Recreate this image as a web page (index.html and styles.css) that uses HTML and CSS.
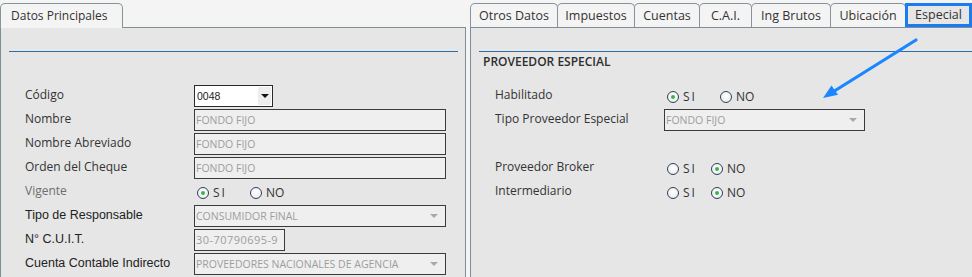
FILE: index.html
```html
<!DOCTYPE html>
<html lang="es">
<head>
<meta charset="utf-8">
<title>Proveedor</title>
<link rel="stylesheet" href="styles.css">
</head>
<body>
<div class="screen">
  <section class="panel panel-left">
    <nav class="tabs">
      <div class="tab tab-main">Datos Principales</div>
    </nav>
    <div class="panel-body">
      <div class="rule"></div>
      <div class="form">
        <label class="lbl">Código</label>
        <div class="combo"><span class="combo-val">0048</span><span class="combo-btn"><i class="tri tri-dark"></i></span></div>

        <label class="lbl">Nombre</label>
        <div class="field field-wide">FONDO FIJO</div>

        <label class="lbl">Nombre Abreviado</label>
        <div class="field field-wide">FONDO FIJO</div>

        <label class="lbl">Orden del Cheque</label>
        <div class="field field-wide">FONDO FIJO</div>

        <label class="lbl lbl-muted">Vigente</label>
        <div class="radios radios-wide">
          <span class="opt"><i class="dot on"></i><span class="opt-si">SI</span></span>
          <span class="opt"><i class="dot"></i><span>NO</span></span>
        </div>

        <label class="lbl lbl-arial">Tipo de Responsable</label>
        <div class="field field-wide field-select">CONSUMIDOR FINAL<i class="tri"></i></div>

        <label class="lbl lbl-arial">N° C.U.I.T.</label>
        <div class="field field-cuit">30-70790695-9</div>

        <label class="lbl lbl-arial">Cuenta Contable Indirecto</label>
        <div class="field field-wide field-select">PROVEEDORES NACIONALES DE AGENCIA<i class="tri"></i></div>
      </div>
    </div>
  </section>

  <section class="panel panel-right">
    <nav class="tabs">
      <div class="tab tab-otros">Otros Datos</div>
      <div class="tab tab-imp">Impuestos</div>
      <div class="tab tab-cue">Cuentas</div>
      <div class="tab tab-cai">C.A.I.</div>
      <div class="tab tab-ing">Ing Brutos</div>
      <div class="tab tab-ubi">Ubicación</div>
      <div class="tab tab-active">Especial</div>
    </nav>
    <div class="panel-body">
      <div class="rule"></div>
      <h2 class="section-title">PROVEEDOR ESPECIAL</h2>
      <div class="form form-right">
        <label class="lbl">Habilitado</label>
        <div class="radios radios-wide">
          <span class="opt"><i class="dot on"></i><span class="opt-si">SI</span></span>
          <span class="opt"><i class="dot"></i><span>NO</span></span>
        </div>

        <label class="lbl">Tipo Proveedor Especial</label>
        <div class="field field-mid field-select">FONDO FIJO<i class="tri"></i></div>

        <span class="spacer"></span>
        <span class="spacer"></span>

        <label class="lbl">Proveedor Broker</label>
        <div class="radios radios-narrow">
          <span class="opt"><i class="dot"></i><span class="opt-si">SI</span></span>
          <span class="opt"><i class="dot on"></i><span>NO</span></span>
        </div>

        <label class="lbl">Intermediario</label>
        <div class="radios radios-narrow">
          <span class="opt"><i class="dot"></i><span class="opt-si">SI</span></span>
          <span class="opt"><i class="dot on"></i><span>NO</span></span>
        </div>
      </div>
    </div>
  </section>

  <svg class="arrow" width="972" height="277" viewBox="0 0 972 277" aria-hidden="true">
    <line x1="916" y1="40" x2="832" y2="92.5" stroke="#1a86ff" stroke-width="3.2" stroke-linecap="round"/>
    <polygon points="823,98 838,94.8 831.5,85.6" fill="#1a86ff"/>
  </svg>
</div>
</body>
</html>
```

FILE: styles.css
```css
html, body {
  margin: 0;
  padding: 0;
  background: #f4f4f4;
  overflow: hidden;
}

.screen {
  position: relative;
  display: flex;
  gap: 4px;
  width: 972px;
  height: 277px;
  padding-top: 3px;
  box-sizing: border-box;
  overflow: hidden;
  font-family: "Open Sans", "Noto Sans", sans-serif;
  font-size: 12px;
  color: #333;
}

.panel {
  flex: none;
  display: flex;
  flex-direction: column;
}

.panel-left { width: 466px; }
.panel-right { width: 506px; }

/* ---------- tabs ---------- */
.tabs {
  display: flex;
  height: 24px;
  position: relative;
  z-index: 1;
}

.tab {
  flex: none;
  height: 24px;
  line-height: 23px;
  padding: 0;
  text-align: center;
  box-sizing: border-box;
  border: 1px solid #87959b;
  border-bottom: none;
  border-radius: 5px 5px 0 0;
  background: #f4f4f4;
  color: #333;
  font-size: 12.5px;
  white-space: nowrap;
}

.tab + .tab { margin-left: -1px; }

.tab-otros { width: 88px; }
.tab-imp { width: 78px; }
.tab-cue { width: 66px; }
.tab-cai { width: 53px; }
.tab-ing { width: 80px; }
.tab-ubi { width: 76px; }

.tab-main {
  width: 123px;
  height: 25px;
  padding-left: 10px;
  text-align: left;
  margin-bottom: -1px;
  font-size: 12px;
}

.tab-active {
  width: 67px;
  border: 3px solid #1b7cf0;
  border-radius: 0;
  background: #e6e6e6;
  line-height: 18px;
  height: 24px;
}

/* ---------- body ---------- */
.panel-body {
  flex: 1;
  border: 1px solid #7f8e95;
  border-bottom: none;
  background: #e6e6e6;
}

.panel-right .panel-body { border-right: none; }

.rule {
  height: 1px;
  background: #2f6da5;
  margin: 23px 7px 0 8px;
}

.panel-right .rule { margin-right: 0; }

.section-title {
  margin: 3px 0 0 12px;
  font-size: 12px;
  font-weight: 600;
  line-height: 14px;
  color: #2e2e2e;
}

.form {
  display: grid;
  grid-template-columns: 169px auto;
  grid-auto-rows: 22px;
  row-gap: 2px;
  align-items: center;
  padding: 33px 0 0 24px;
}

.form-right {
  padding-top: 16px;
  padding-left: 24px;
}

.lbl {
  line-height: 16px;
  color: #333;
  margin-top: -2px;
  white-space: nowrap;
}

.lbl-muted { color: #6e6e6e; }

.lbl-arial {
  font-family: "Liberation Sans", Arial, sans-serif;
  font-size: 12.5px;
  color: #222;
}

/* ---------- fields ---------- */
.field {
  position: relative;
  height: 22px;
  box-sizing: border-box;
  border: 1px solid #3a3a3a;
  background: #efefef;
  color: #9d9d9d;
  font-size: 10.5px;
  line-height: 20px;
  padding-left: 1px;
  white-space: nowrap;
  overflow: hidden;
}

.field-wide { width: 252px; }
.field-mid { width: 201px; }

.field-cuit {
  width: 91px;
  font-size: 11px;
  letter-spacing: 0.45px;
}

.tri {
  display: block;
  width: 0;
  height: 0;
  border-left: 4px solid transparent;
  border-right: 4px solid transparent;
  border-top: 4px solid #a9a9a9;
}

.field-select .tri {
  position: absolute;
  right: 7px;
  top: 8px;
}

.combo {
  display: flex;
  width: 79px;
  height: 22px;
  box-sizing: border-box;
  border: 1px solid #2a2a2a;
  background: #fff;
}

.combo-val {
  flex: 1;
  font-family: "Liberation Sans", Arial, sans-serif;
  font-size: 10.5px;
  line-height: 20px;
  padding-left: 2px;
  color: #1c1c1c;
}

.combo-btn {
  width: 13px;
  margin: 1px 1px 1px 0;
  background: #ededed;
  display: flex;
  align-items: center;
  justify-content: center;
}

.tri-dark { border-top-color: #111; }

/* ---------- radios ---------- */
.radios {
  display: flex;
  align-items: center;
  padding-left: 3px;
  margin-top: 1px;
}

.opt {
  display: flex;
  align-items: center;
  gap: 4px;
  color: #333;
  font-size: 12px;
}

.radios-wide .opt:first-child { width: 53px; }
.radios-narrow .opt:first-child { width: 44px; }

.opt-si { letter-spacing: 2px; }

.dot {
  position: relative;
  width: 12px;
  height: 12px;
  box-sizing: border-box;
  border: 1px solid #2f3f5f;
  border-radius: 50%;
  background: radial-gradient(circle at 50% 40%, #ffffff 0%, #f1f1f1 60%, #dcdcdc 100%);
}

.dot.on::after {
  content: "";
  position: absolute;
  left: 3px;
  top: 3px;
  width: 4px;
  height: 4px;
  border-radius: 50%;
  background: #34b64a;
}

.spacer { height: 22px; }

/* ---------- annotation arrow ---------- */
.arrow {
  position: absolute;
  left: 0;
  top: 0;
  pointer-events: none;
  z-index: 5;
}
```
